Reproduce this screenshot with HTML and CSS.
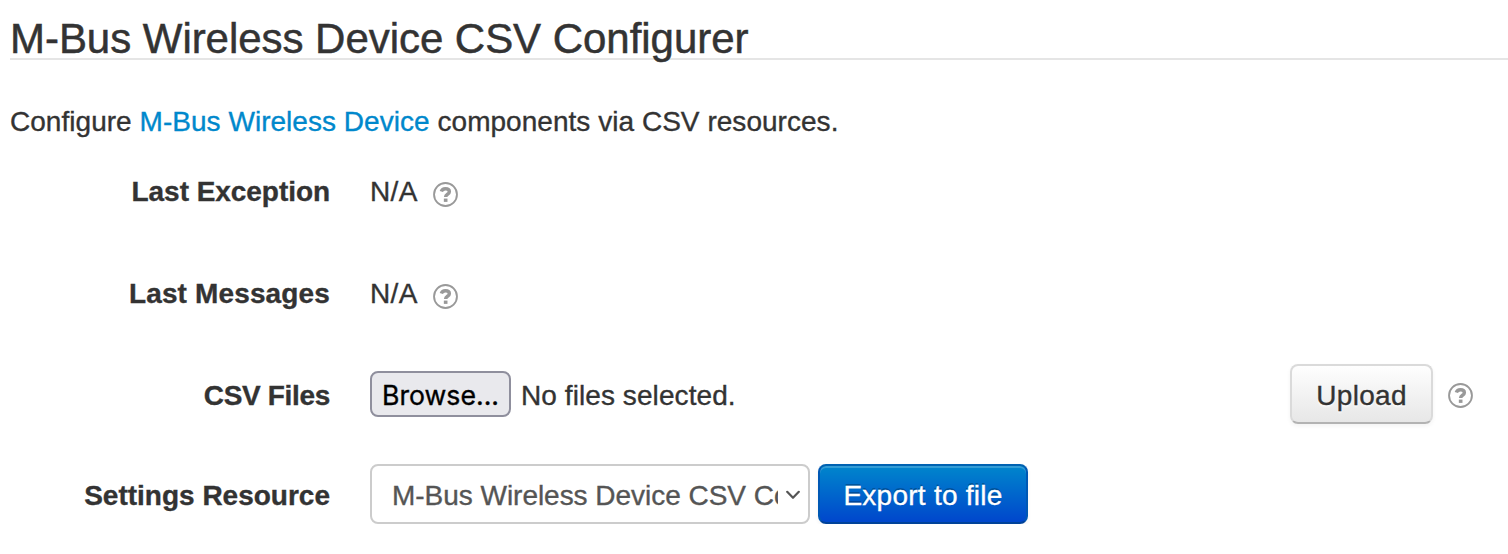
FILE: index.html
```html
<!DOCTYPE html>
<html lang="en">
<head>
<meta charset="utf-8">
<title>M-Bus Wireless Device CSV Configurer</title>
<link rel="stylesheet" href="styles.css">
</head>
<body>
<svg class="symbols" width="0" height="0" aria-hidden="true">
  <symbol id="help" viewBox="0 0 24 24">
    <circle cx="12" cy="12" r="11" fill="none" stroke="#999" stroke-width="1.8"/>
    <path d="M8 9.2C8.6 7.3 10 6.5 11.9 6.5c2.2 0 3.8 1 3.8 2.8 0 2.7-3.6 2.3-3.6 5.1" fill="none" stroke="#999" stroke-width="3.3"/>
    <path d="M10.4 15.9h3.5v3.2h-3.5z" fill="#999"/>
  </symbol>
</svg>
<main class="page">
  <h1 class="title">M-Bus Wireless Device CSV Configurer</h1>
  <p class="intro">Configure <a class="link" href="#">M-Bus Wireless Device</a> components via CSV resources.</p>
  <form class="settings">
    <div class="row row-tall">
      <span class="label label-exception">Last Exception</span>
      <div class="value"><span class="text text-na">N/A</span><svg class="help"><use href="#help"/></svg></div>
    </div>
    <div class="row row-tall">
      <span class="label label-messages">Last Messages</span>
      <div class="value"><span class="text text-na">N/A</span><svg class="help"><use href="#help"/></svg></div>
    </div>
    <div class="row">
      <span class="label label-files">CSV Files</span>
      <div class="value">
        <button class="browse" type="button">Browse...</button>
        <span class="text file-status">No files selected.</span>
        <button class="btn upload" type="button">Upload</button>
        <svg class="help help-upload"><use href="#help"/></svg>
      </div>
    </div>
    <div class="row row-last">
      <span class="label">Settings Resource</span>
      <div class="value">
        <div class="select" role="combobox">
          <span class="select-text">M-Bus Wireless Device CSV Co</span>
          <svg class="chevron" viewBox="0 0 14 10"><path d="M1.2 1.8 7 7.8l5.8-6" fill="none" stroke="#555" stroke-width="2.2" stroke-linecap="round" stroke-linejoin="round"/></svg>
        </div>
        <button class="btn export" type="button">Export to file</button>
      </div>
    </div>
  </form>
</main>
</body>
</html>
```
FILE: styles.css
```css
* { box-sizing: border-box; }
body {
  margin: 0;
  background: #fff;
  color: #333;
  font: 28px/40px "Liberation Sans", Arial, sans-serif;
  -webkit-text-stroke: 0.35px;
  overflow: hidden;
}
.symbols { display: block; }
.page { padding-left: 10px; }
.title {
  height: 60px;
  margin: 0;
  padding-top: 19px;
  border-bottom: 2px solid #e5e5e5;
  font-size: 42px;
  font-weight: 400;
  line-height: 40px;
  letter-spacing: -0.04px;
  white-space: nowrap;
  -webkit-text-stroke-width: 0.5px;
}
.intro { margin: 42px 0 18px; letter-spacing: 0.035px; white-space: nowrap; }
.link { color: #08c; text-decoration: none; }
.row { display: grid; grid-template-columns: 320px 1fr; column-gap: 40px; height: 100px; }
.row-tall { height: 102px; }
.row-last { height: 60px; }
.label { padding-top: 12px; text-align: right; font-weight: 700; white-space: nowrap; }
.label-exception { letter-spacing: -0.05px; }
.label-messages { letter-spacing: 0.14px; }
.label-files { letter-spacing: -0.33px; }
.value { display: flex; align-items: flex-start; }
.text { padding-top: 12px; white-space: nowrap; }
.text-na { letter-spacing: 0.4px; }
.help { width: 25px; height: 25px; margin: 22px 0 0 15px; flex: none; }
.browse {
  width: 141px;
  height: 46px;
  margin-top: 7px;
  padding: 1px 0 0;
  border: 2px solid #8f8f9d;
  border-radius: 8px;
  background: #e9e9ed;
  color: #000;
  font: 26.67px/40px Inter, sans-serif;
}
.file-status { margin-left: 10px; letter-spacing: 0.08px; }
.btn {
  height: 60px;
  padding: 3px 0 0;
  border-radius: 8px;
  font: inherit;
  line-height: 40px;
  white-space: nowrap;
}
.upload {
  width: 143px;
  margin-left: auto;
  border: 2px solid #ccc;
  border-color: #dadada #dadada #b3b3b3;
  background: linear-gradient(#fff, #e6e6e6) border-box;
  box-shadow: inset 0 2px 0 rgba(255, 255, 255, .2), 0 2px 4px rgba(0, 0, 0, .05);
  color: #333;
  letter-spacing: 0.3px;
  text-shadow: 0 2px 2px rgba(255, 255, 255, .75);
}
.help-upload { margin-top: 19px; margin-right: 35px; }
.select {
  display: flex;
  align-items: center;
  width: 440px;
  height: 60px;
  padding: 3px 8px 0 20px;
  border: 2px solid #ccc;
  border-radius: 8px;
  color: #555;
}
.select-text { flex: 1; min-width: 0; overflow: hidden; white-space: nowrap; letter-spacing: -0.03px; }
.chevron { width: 14px; height: 10px; margin: 0 0 2px 8px; flex: none; }
.export {
  width: 210px;
  margin-left: 8px;
  border: 2px solid;
  border-color: #0062b1 #0058b4 #004299;
  background: linear-gradient(#08c, #04c) border-box;
  box-shadow: inset 0 2px 0 rgba(255, 255, 255, .2), 0 2px 4px rgba(0, 0, 0, .05);
  color: #fff;
  letter-spacing: 0.25px;
  text-shadow: 0 -2px 0 rgba(0, 0, 0, .25);
}
```
